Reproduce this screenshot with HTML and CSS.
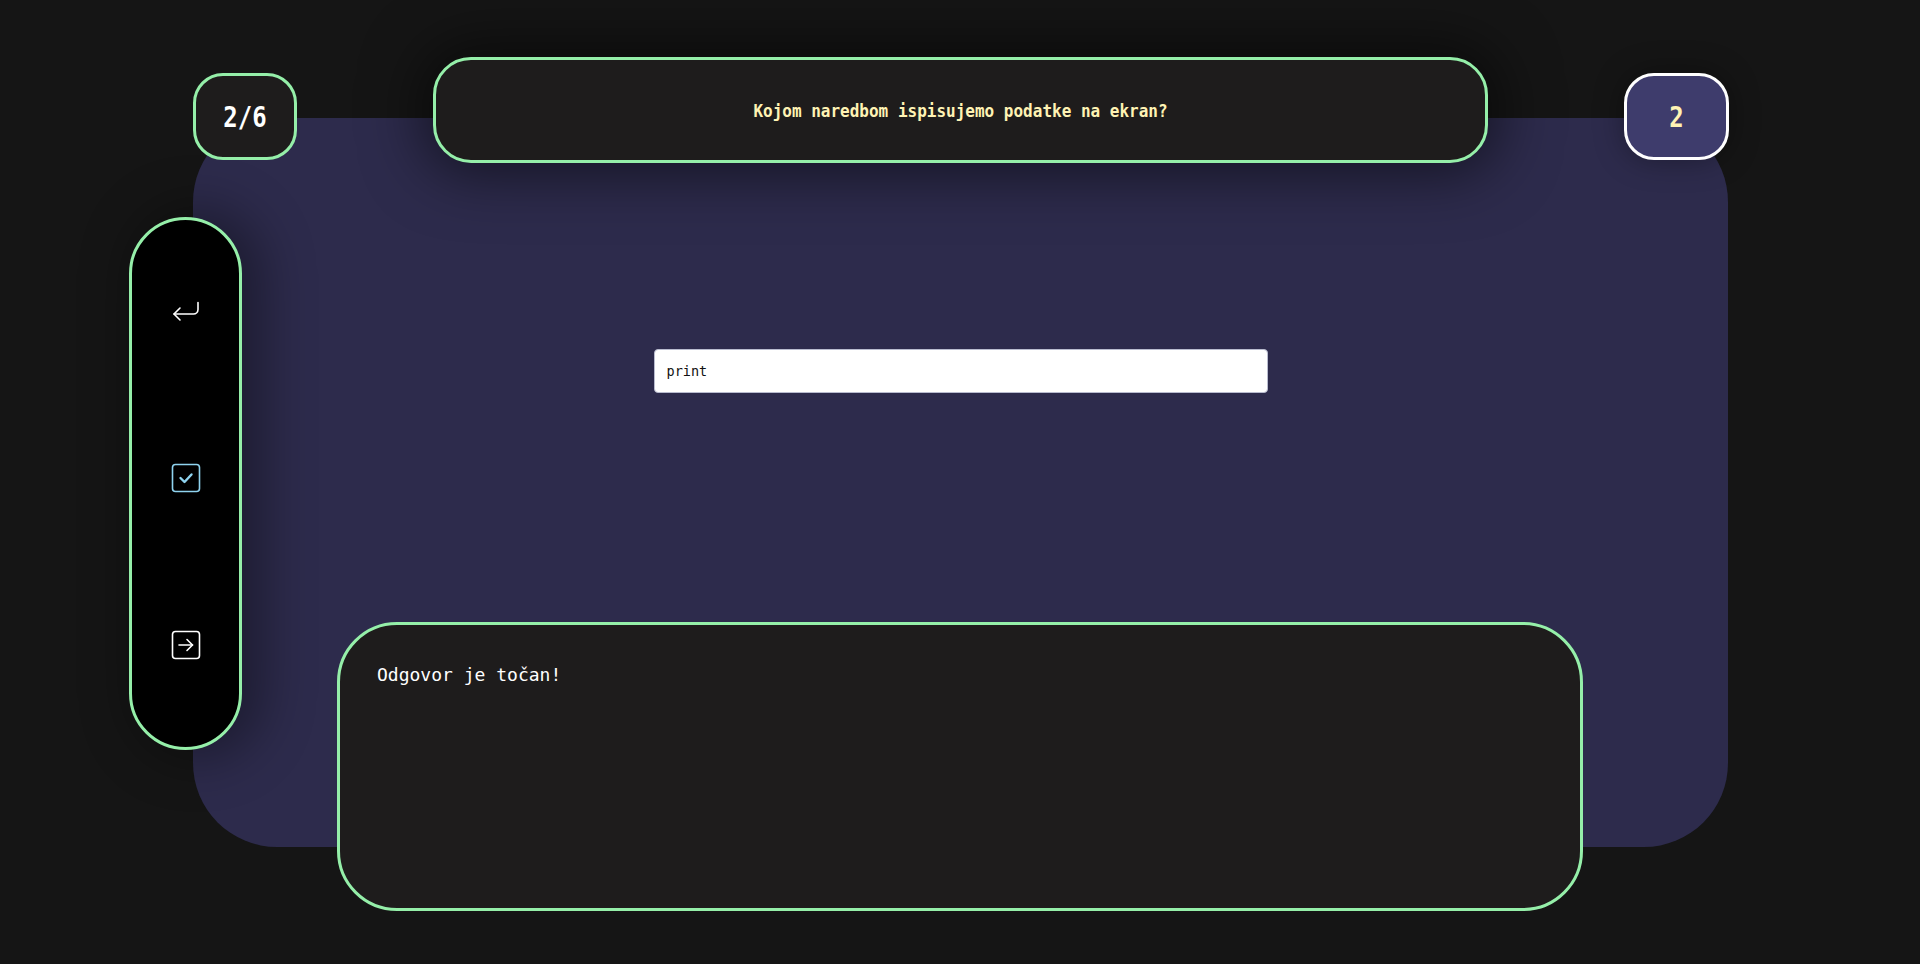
FILE: index.html
```html
<!DOCTYPE html>
<html lang="hr">
<head>
<meta charset="utf-8">
<title>Kviz</title>
<link rel="stylesheet" href="styles.css">
</head>
<body>
<div class="stage">
  <main class="panel">
    <div class="badge badge-progress"><span class="pix">2/6</span></div>
    <div class="question"><span class="q-text">Kojom naredbom ispisujemo podatke na ekran?</span></div>
    <div class="badge badge-score"><span class="pix">2</span></div>

    <nav class="sidebar">
      <button class="side-btn" aria-label="Natrag">
        <svg width="30" height="30" viewBox="0 0 30 30" fill="none" stroke="#ffffff" stroke-width="1.6" stroke-linecap="round" stroke-linejoin="round">
          <path d="M27 6.5 V13.5 A4.5 4.5 0 0 1 22.5 18 H3"/>
          <polyline points="9,12 3,18 9,24"/>
        </svg>
      </button>
      <button class="side-btn" aria-label="Provjeri">
        <svg width="30" height="30" viewBox="0 0 30 30" fill="none" stroke="#8fd3ef" stroke-width="1.6" stroke-linecap="round" stroke-linejoin="round">
          <rect x="1.5" y="1.5" width="27" height="27" rx="3"/>
          <polyline points="9.5,15 13.5,19 20.5,11.5" stroke-width="2.4"/>
        </svg>
      </button>
      <button class="side-btn" aria-label="Dalje">
        <svg width="30" height="30" viewBox="0 0 30 30" fill="none" stroke="#ffffff" stroke-width="1.6" stroke-linecap="round" stroke-linejoin="round">
          <rect x="1.5" y="1.5" width="27" height="27" rx="3"/>
          <line x1="8" y1="15" x2="21.5" y2="15"/>
          <polyline points="16,9.5 21.5,15 16,20.5"/>
        </svg>
      </button>
    </nav>

    <div class="answer-row">
      <input class="answer" type="text" value="print">
    </div>

    <section class="feedback">
      <p class="feedback-text">Odgovor je točan!</p>
    </section>
  </main>
</div>
</body>
</html>
```

FILE: styles.css
```css
html, body {
  margin: 0;
  padding: 0;
  background: #151515;
  width: 1920px;
  height: 964px;
  overflow: hidden;
  font-family: "DejaVu Sans Mono", "Liberation Mono", monospace;
}

.stage {
  padding: 118px 0 0 193px;
}

.panel {
  position: relative;
  width: 1535px;
  height: 729px;
  background: #2d2b4c;
  border-radius: 84px;
  box-sizing: border-box;
  padding-top: 231px;
}

.badge {
  position: absolute;
  top: -45px;
  height: 87px;
  box-sizing: border-box;
  border-radius: 30px;
  display: flex;
  align-items: center;
  justify-content: center;
  z-index: 2;
}

.badge-progress {
  left: 0;
  width: 104px;
  background: #1e1c1c;
  border: 3px solid #95efa9;
  color: #ffffff;
}

.badge-score {
  left: 1431px;
  width: 105px;
  background: #3e3c6c;
  border: 3px solid #ffffff;
  color: #fff3b4;
  box-shadow: 0 0 30px rgba(0, 0, 0, 0.35);
}

.pix {
  font-weight: bold;
  font-size: 24px;
  display: inline-block;
  transform: scaleY(1.2);
  letter-spacing: 0;
}

.question {
  position: absolute;
  left: 240px;
  top: -61px;
  width: 1055px;
  height: 106px;
  box-sizing: border-box;
  background: #1e1c1c;
  border: 3px solid #95efa9;
  border-radius: 38px;
  display: flex;
  align-items: center;
  justify-content: center;
  box-shadow: 0 0 60px 10px rgba(0, 0, 0, 0.55);
  z-index: 1;
}

.q-text {
  color: #fff3b4;
  font-weight: bold;
  font-size: 16px;
  display: inline-block;
  transform: scaleY(1.1);
}

.sidebar {
  position: absolute;
  left: -64px;
  top: 99px;
  width: 113px;
  height: 533px;
  box-sizing: border-box;
  background: #000000;
  border: 3px solid #95efa9;
  border-radius: 57px;
  display: flex;
  flex-direction: column;
  align-items: center;
  justify-content: flex-start;
  gap: 137px;
  padding-top: 76px;
  box-shadow: 12px 0 50px 10px rgba(0, 0, 0, 0.35);
  z-index: 2;
}

.side-btn {
  background: none;
  border: 0;
  padding: 0;
  width: 30px;
  height: 30px;
  display: block;
}

.side-btn svg {
  display: block;
}

.answer-row {
  display: flex;
  justify-content: center;
}

.answer {
  width: 614px;
  height: 44px;
  box-sizing: border-box;
  border: 1px solid #b9bccf;
  border-radius: 4px;
  background: #ffffff;
  padding: 0 12px;
  font-family: "DejaVu Sans Mono", monospace;
  font-size: 13.5px;
  color: #111111;
  outline: none;
}

.feedback {
  position: absolute;
  left: 144px;
  top: 504px;
  width: 1246px;
  height: 289px;
  box-sizing: border-box;
  background: #1e1c1c;
  border: 3px solid #95efa9;
  border-radius: 60px;
  padding: 38px 37px;
  z-index: 1;
}

.feedback-text {
  margin: 0;
  color: #ffffff;
  font-family: "DejaVu Sans Mono", "Liberation Mono", monospace;
  font-size: 18px;
  line-height: 24px;
}
```
